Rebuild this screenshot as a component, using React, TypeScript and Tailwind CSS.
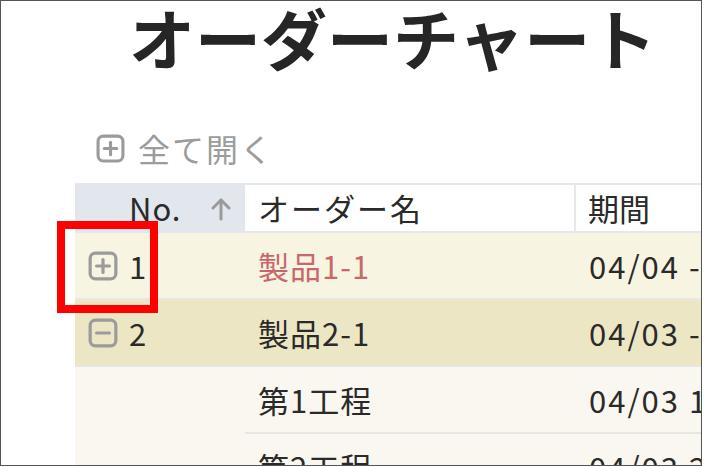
import React from "react";

const font = { fontFamily: '"Noto Sans CJK JP", "Noto Sans", sans-serif' };

function PlusBox({ minus = false, className = "" }: { minus?: boolean; className?: string }) {
  return (
    <svg viewBox="0 0 28 28" className={className} fill="none" stroke="#9b9b9b" strokeWidth={3} strokeLinecap="round">
      <rect x="2" y="2" width="24" height="24" rx="5" />
      <line x1="8" y1="14" x2="20" y2="14" />
      {!minus && <line x1="14" y1="8" x2="14" y2="20" />}
    </svg>
  );
}

function UpArrow() {
  return (
    <svg viewBox="0 0 22 24" className="w-[22px] h-[24px]" fill="none" stroke="#9a9a9a" strokeWidth={3} strokeLinecap="round" strokeLinejoin="round">
      <line x1="11" y1="3" x2="11" y2="22" />
      <polyline points="3,11 11,3 19,11" />
    </svg>
  );
}

type Row = {
  no?: string;
  toggle?: "plus" | "minus";
  name: string;
  period: string;
  bg: string;
  nameColor?: string;
  child?: boolean;
};

const rows: Row[] = [
  { no: "1", toggle: "plus", name: "製品1-1", period: "04/04 - 04/10", bg: "bg-[#f7f4e1]", nameColor: "text-[#c9686a]" },
  { no: "2", toggle: "minus", name: "製品2-1", period: "04/03 - 04/12", bg: "bg-[#ede6c4]" },
  { name: "第1工程", period: "04/03 10:00", bg: "bg-[#f9f7ef]", child: true },
  { name: "第2工程", period: "04/03 2", bg: "bg-[#f9f7ef]", child: true },
];

export default function App() {
  return (
    <div className="w-[704px] h-[467px] bg-white overflow-hidden text-[#2a2a2a]" style={font}>
      <div className="relative w-[702px] h-[466px] border border-[#555] overflow-hidden">
        <h1 className="pl-[128px] h-[76px] text-[66px] leading-[70px] font-bold text-[#262626] whitespace-nowrap">
          オーダーチャート
        </h1>

        <div className="mt-[53px] flex items-center h-[36px] pl-[95px] gap-[13px] text-[#9c9c9c]">
          <PlusBox className="w-[29px] h-[29px]" />
          <span className="text-[32px] leading-[36px] tracking-[2px]">全て開く</span>
        </div>

        <div className="mt-[17px] ml-[74px] w-[700px]">
          {/* header */}
          <div className="flex h-[50px] border-t-2 border-b-2 border-[#e4e8ed] text-[31px] leading-[46px] text-[#2a2a2a]">
            <div className="w-[170px] shrink-0 bg-[#e2e7ed] flex items-center pl-[54px]">
              <span className="tracking-[1px]">No.</span>
              <span className="ml-[29px] mt-[2px]">
                <UpArrow />
              </span>
            </div>
            <div className="w-[331px] shrink-0 bg-white pl-[13px] border-r-2 border-[#e4e8ed] tracking-[2px]">オーダー名</div>
            <div className="flex-1 bg-white pl-[12px]">期間</div>
          </div>

          {rows.map((r, i) => (
            <div key={i} className={`flex h-[67px] ${r.bg} text-[31px] leading-[65px] whitespace-nowrap`}>
              <div className={`w-[170px] shrink-0 flex items-center pl-[13px] ${r.child ? "" : "border-b-2 border-[#e6e6e2]"}`}>
                {r.toggle && <PlusBox minus={r.toggle === "minus"} className="w-[30px] h-[30px]" />}
                {r.no && <span className="ml-[11px]">{r.no}</span>}
              </div>
              <div className={`w-[331px] shrink-0 pl-[13px] border-b-2 border-[#e6e6e2] tracking-[1px] ${r.nameColor ?? ""}`}>{r.name}</div>
              <div className="flex-1 pl-[13px] border-b-2 border-[#e6e6e2] tracking-[2px]">{r.period}</div>
            </div>
          ))}
        </div>

        {/* highlight frame */}
        <div className="absolute left-[56px] top-[220px] w-[101px] h-[92px] border-[8px] border-[#ff0000]" />
      </div>
    </div>
  );
}
